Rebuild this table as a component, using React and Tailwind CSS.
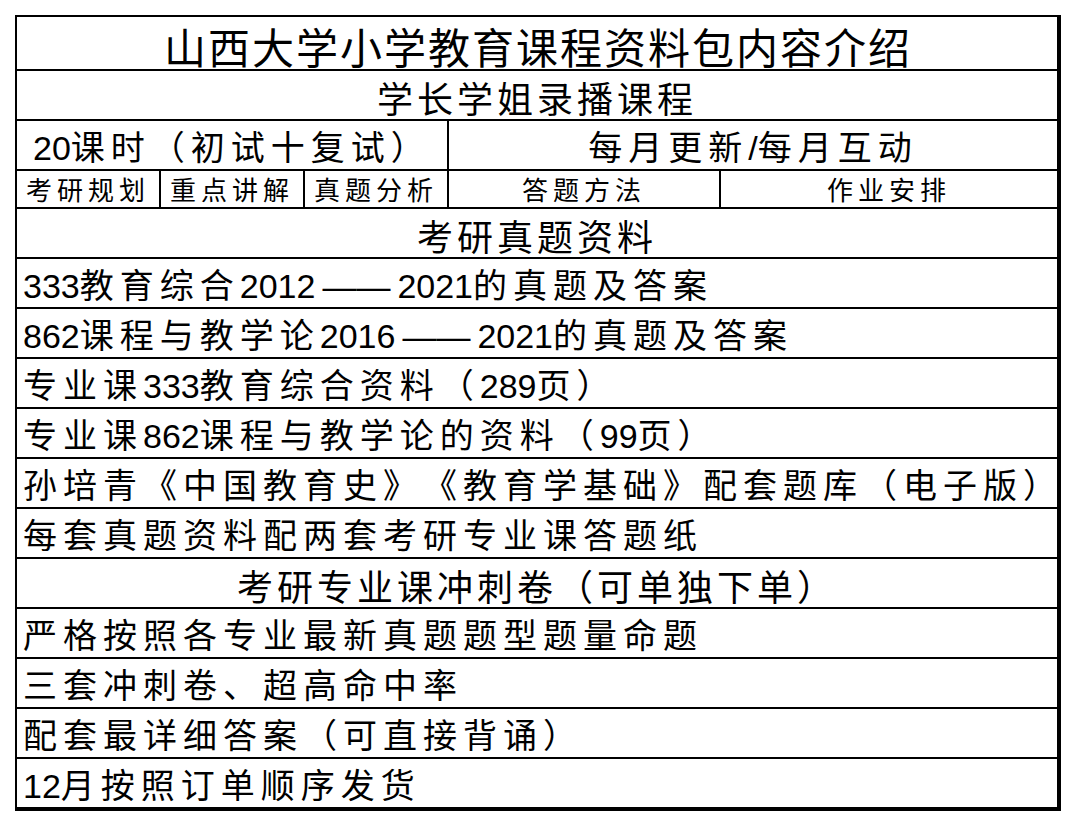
const CJK = /[\u3000-\u9fff\uff00-\uffef]/;

// spread out the Chinese characters only, digits and dashes stay tight
const Spaced = ({ text, ls }) => {
  const parts = text.match(/[\u3000-\u9fff\uff00-\uffef]+|\u2014+|[^\u2014\u3000-\u9fff\uff00-\uffef]+/g);
  return parts.map((p, i) => {
    if (CJK.test(p)) return <span key={i} className={ls}>{p}</span>;
    if (p[0] === "\u2014") return <span key={i} className="mx-[7px]">{p}</span>;
    return <span key={i}>{p}</span>;
  });
};

const body = "font-['Liberation_Sans','Noto_Sans_CJK_SC',sans-serif] [text-spacing-trim:space-all]";
const head = "font-['Noto_Sans_CJK_SC',sans-serif] [text-spacing-trim:space-all]";

const HeadRow = ({ children }) => (
  <div className={`${head} h-[50px] border-b-2 border-black flex items-center justify-center pt-[4px] text-[36px] leading-none tracking-[4px] text-black`}>
    {children}
  </div>
);

const ItemRow = ({ text, last }) => (
  <div className={`${body} ${last ? "h-[48px]" : "h-[50px] border-b-2 border-black"} flex items-center pl-[6px] pt-[5px] text-[34px] leading-none text-black whitespace-nowrap`}>
    <Spaced text={text} ls="tracking-[6px]" />
  </div>
);

const App = () => {
  return (
    <div className="w-[1076px] h-[826px] bg-white pt-[15px] pl-[15px]">
      <div className="w-[1046px] border-l-2 border-t-2 border-r-4 border-b-4 border-black flex flex-col">
        <div className={`${head} h-[54px] border-b-2 border-black flex items-center justify-center pt-[6px] pl-[2px] text-[42px] leading-none tracking-[2px] text-black whitespace-nowrap`}>
          山西大学小学教育课程资料包内容介绍
        </div>
        <HeadRow>学长学姐录播课程</HeadRow>
        <div className={`${body} h-[50px] border-b-2 border-black flex text-black leading-none`}>
          <div className="w-[432px] border-r-2 border-black flex items-center pl-[16px] pt-[5px] text-[34px] whitespace-nowrap">
            <Spaced text="20课时（初试十复试）" ls="tracking-[6px]" />
          </div>
          <div className="flex-1 flex items-center justify-center pt-[5px] text-[34px] whitespace-nowrap">
            <Spaced text="每月更新/每月互动" ls="tracking-[6px]" />
          </div>
        </div>
        <div className={`${body} h-[38px] border-b-2 border-black flex text-[26px] leading-none text-black`}>
          <div className="w-[144px] border-r-2 border-black flex items-center justify-center pt-[4px] tracking-[5px]">考研规划</div>
          <div className="w-[144px] border-r-2 border-black flex items-center justify-center pt-[4px] tracking-[5px]">重点讲解</div>
          <div className="w-[144px] border-r-2 border-black flex items-center justify-center pt-[4px] tracking-[5px]">真题分析</div>
          <div className="w-[272px] border-r-2 border-black flex items-center justify-center pt-[4px] tracking-[5px]">答题方法</div>
          <div className="flex-1 flex items-center justify-center pt-[4px] tracking-[5px]">作业安排</div>
        </div>
        <HeadRow>考研真题资料</HeadRow>
        <ItemRow text="333教育综合2012——2021的真题及答案" />
        <ItemRow text="862课程与教学论2016——2021的真题及答案" />
        <ItemRow text="专业课333教育综合资料（289页）" />
        <ItemRow text="专业课862课程与教学论的资料（99页）" />
        <ItemRow text="孙培青《中国教育史》《教育学基础》配套题库（电子版）" />
        <ItemRow text="每套真题资料配两套考研专业课答题纸" />
        <HeadRow>考研专业课冲刺卷（可单独下单）</HeadRow>
        <ItemRow text="严格按照各专业最新真题题型题量命题" />
        <ItemRow text="三套冲刺卷、超高命中率" />
        <ItemRow text="配套最详细答案（可直接背诵）" />
        <ItemRow text="12月按照订单顺序发货" last />
      </div>
    </div>
  );
};

export default App;
